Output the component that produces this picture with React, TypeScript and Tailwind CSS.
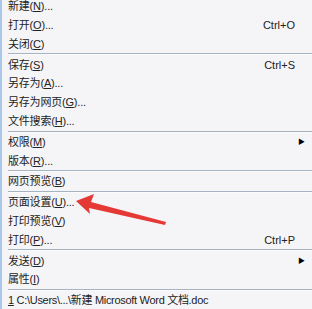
import React from 'react'

type Item = { label: string; key: string; tail?: string; shortcut?: string; sub?: boolean }

const groups: Item[][] = [
  [
    { label: '新建', key: 'N', tail: '...' },
    { label: '打开', key: 'O', tail: '...', shortcut: 'Ctrl+O' },
    { label: '关闭', key: 'C' },
  ],
  [
    { label: '保存', key: 'S', shortcut: 'Ctrl+S' },
    { label: '另存为', key: 'A', tail: '...' },
    { label: '另存为网页', key: 'G', tail: '...' },
    { label: '文件搜索', key: 'H', tail: '...' },
  ],
  [
    { label: '权限', key: 'M', sub: true },
    { label: '版本', key: 'R', tail: '...' },
  ],
  [{ label: '网页预览', key: 'B' }],
  [
    { label: '页面设置', key: 'U', tail: '...' },
    { label: '打印预览', key: 'V' },
    { label: '打印', key: 'P', tail: '...', shortcut: 'Ctrl+P' },
  ],
  [
    { label: '发送', key: 'D', sub: true },
    { label: '属性', key: 'I' },
  ],
]

function Row({ item }: { item: Item }) {
  return (
    <div className="h-[18.8px] flex items-center pl-[6px] pr-[8px]">
      <span className="flex-1 whitespace-nowrap tracking-[-0.2px]">
        {item.label}(<span className="underline underline-offset-1">{item.key}</span>){item.tail}
      </span>
      {item.shortcut && <span className="mr-[9px]">{item.shortcut}</span>}
      {item.sub && <span className="text-[7px] text-black mr-[-1px]">▶</span>}
    </div>
  )
}

export default function App() {
  return (
    <div
      className="w-[312px] h-[309px] overflow-hidden bg-[#f5f5f8] border-l-[2px] border-[#a9c8ea] text-[11px] text-[#222] relative"
      style={{ fontFamily: '"Liberation Sans", "Noto Sans CJK SC", sans-serif' }}
    >
      <div className="-mt-[3px]">
        {groups.map((g, i) => (
          <div key={i}>
            {g.map((it) => (
              <Row key={it.label} item={it} />
            ))}
            <div className="ml-[6px] h-px bg-[#a6b3c3]" />
            <div className="ml-[6px] h-px bg-[#fbfbfd]" />
          </div>
        ))}
        <div className="h-[19px] flex items-center pl-[6px] whitespace-nowrap tracking-[-0.3px]">
          <span className="underline underline-offset-1">1</span>&nbsp;C:\Users\...\新建 Microsoft Word 文档.doc
        </div>
      </div>
      <svg className="absolute left-0 top-0 pointer-events-none" width="312" height="309" viewBox="0 0 312 309">
        <polygon
          points="74,201 92,194 89,202 164,222 163,225 87,208 88,214"
          fill="#e53935"
        />
      </svg>
    </div>
  )
}
